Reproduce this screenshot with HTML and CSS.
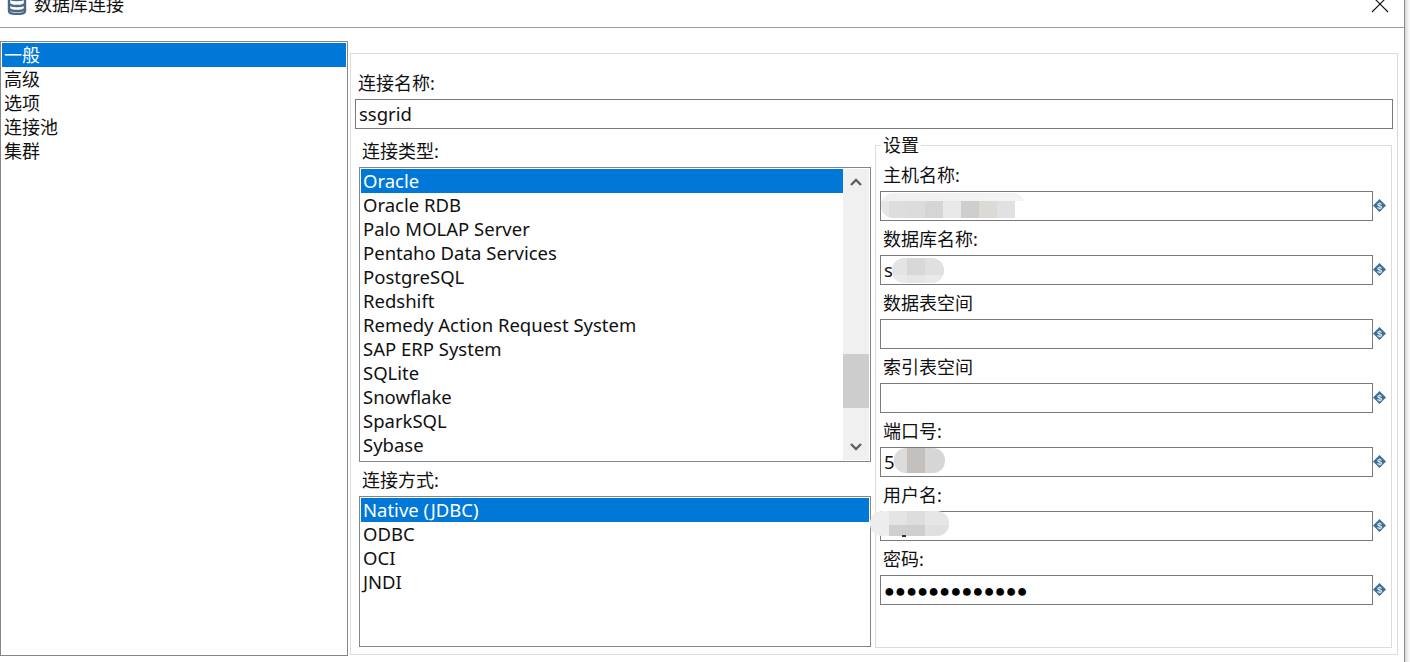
FILE: index.html
```html
<!DOCTYPE html>
<html lang="zh-CN">
<head>
  <meta charset="UTF-8">
  <title>数据库连接</title>
  <link rel="stylesheet" href="styles.css">
</head>
<body>

<div class="window">

  <!-- TITLE BAR -->
  <div class="titlebar">
    <svg class="db-icon" width="20" height="24" viewBox="0 0 20 24">
      <path d="M2 6v14c0 2 3.500 3 8 3s8-1 8-3V6" fill="#fff" stroke="#4a6a85" stroke-width="2.400"/>
      <ellipse cx="10" cy="6" rx="8" ry="3" fill="none" stroke="#4a6a85" stroke-width="2.400"/>
      <path d="M2 12c0 2 3.500 3 8 3s8-1 8-3M2 17c0 2 3.500 3 8 3s8-1 8-3" fill="none" stroke="#4a6a85" stroke-width="2.400"/>
    </svg>
    <span class="title">数据库连接</span>
    <svg class="close" width="18" height="18" viewBox="0 0 18 18">
      <path d="M1 0L17 16M17 0L1 16" stroke="#111" stroke-width="1.100"/>
    </svg>
  </div>

  <div class="content">

    <!-- LEFT MENU -->
    <ul class="list menu">
      <li class="selected">一般</li>
      <li>高级</li>
      <li>选项</li>
      <li>连接池</li>
      <li>集群</li>
    </ul>

    <div class="panel">
      <div class="name-label">连接名称:</div>
      <input class="name-input" type="text" value="ssgrid">

      <div class="columns">

        <div class="left-col">
          <div class="col-label">连接类型:</div>
          <div class="list type-list">
            <ul>
              <li class="selected">Oracle</li>
              <li>Oracle RDB</li>
              <li>Palo MOLAP Server</li>
              <li>Pentaho Data Services</li>
              <li>PostgreSQL</li>
              <li>Redshift</li>
              <li>Remedy Action Request System</li>
              <li>SAP ERP System</li>
              <li>SQLite</li>
              <li>Snowflake</li>
              <li>SparkSQL</li>
              <li>Sybase</li>
            </ul>
            <div class="scrollbar">
              <svg width="12" height="8" viewBox="0 0 12 8"><path d="M1 7L6 2L11 7" fill="none" stroke="#606060" stroke-width="2.400"/></svg>
              <div class="track"><div class="thumb"></div></div>
              <svg width="12" height="8" viewBox="0 0 12 8"><path d="M1 1L6 6L11 1" fill="none" stroke="#606060" stroke-width="2.400"/></svg>
            </div>
          </div>

          <div class="col-label method-label">连接方式:</div>
          <ul class="list method-list">
            <li class="selected">Native (JDBC)</li>
            <li>ODBC</li>
            <li>OCI</li>
            <li>JNDI</li>
          </ul>
        </div>

        <fieldset class="settings">
          <legend>设置</legend>

          <div class="field-label">主机名称:</div>
          <div class="field">
            <input type="text">
            <div class="smudge smudge-host"></div>
            <svg class="var-icon" width="13" height="13" viewBox="0 0 13 13"><path d="M6.500 0L13 6.500L6.500 13L0 6.500Z" fill="#3f6f94"/><text x="6.500" y="9.800" text-anchor="middle">$</text></svg>
          </div>

          <div class="field-label">数据库名称:</div>
          <div class="field">
            <input type="text" value="s">
            <div class="smudge smudge-db"></div>
            <svg class="var-icon" width="13" height="13" viewBox="0 0 13 13"><path d="M6.500 0L13 6.500L6.500 13L0 6.500Z" fill="#3f6f94"/><text x="6.500" y="9.800" text-anchor="middle">$</text></svg>
          </div>

          <div class="field-label">数据表空间</div>
          <div class="field">
            <input type="text">
            <svg class="var-icon" width="13" height="13" viewBox="0 0 13 13"><path d="M6.500 0L13 6.500L6.500 13L0 6.500Z" fill="#3f6f94"/><text x="6.500" y="9.800" text-anchor="middle">$</text></svg>
          </div>

          <div class="field-label">索引表空间</div>
          <div class="field">
            <input type="text">
            <svg class="var-icon" width="13" height="13" viewBox="0 0 13 13"><path d="M6.500 0L13 6.500L6.500 13L0 6.500Z" fill="#3f6f94"/><text x="6.500" y="9.800" text-anchor="middle">$</text></svg>
          </div>

          <div class="field-label">端口号:</div>
          <div class="field">
            <input type="text" value="5">
            <div class="smudge smudge-port"></div>
            <svg class="var-icon" width="13" height="13" viewBox="0 0 13 13"><path d="M6.500 0L13 6.500L6.500 13L0 6.500Z" fill="#3f6f94"/><text x="6.500" y="9.800" text-anchor="middle">$</text></svg>
          </div>

          <div class="field-label">用户名:</div>
          <div class="field">
            <input type="text">
            <div class="smudge smudge-user"></div>
            <svg class="var-icon" width="13" height="13" viewBox="0 0 13 13"><path d="M6.500 0L13 6.500L6.500 13L0 6.500Z" fill="#3f6f94"/><text x="6.500" y="9.800" text-anchor="middle">$</text></svg>
          </div>

          <div class="field-label">密码:</div>
          <div class="field">
            <input class="password" type="text" value="●●●●●●●●●●●●●">
            <svg class="var-icon" width="13" height="13" viewBox="0 0 13 13"><path d="M6.500 0L13 6.500L6.500 13L0 6.500Z" fill="#3f6f94"/><text x="6.500" y="9.800" text-anchor="middle">$</text></svg>
          </div>
        </fieldset>

      </div>
    </div>
  </div>
</div>

</body>
</html>
```

FILE: styles.css
```css
* {
  box-sizing: border-box;
}
html, body {
  margin: 0;
  height: 662px;
  overflow: hidden;
}
body {
  font-family: "Noto Sans", "Noto Sans CJK SC", sans-serif;
  font-size: 18px;
  line-height: 24px;
  color: #111;
  background: linear-gradient(to right, #d8d8d8, #fff) no-repeat 1405px 0 / 5px 100%;
}
ul {
  list-style: none;
  margin: 0;
  padding: 0;
}
input {
  display: block;
  font: inherit;
  font-size: 18.500px;
  color: inherit;
  height: 30px;
  padding: 0 3px 2px;
  background: transparent;
  border: 1px solid #7a7a7a;
  border-radius: 0;
  outline: none;
}

.window {
  width: 1405px;
  height: 662px;
  background: #fff;
  border-right: 1px solid #8a8a8a;
}

.titlebar {
  display: flex;
  height: 28px;
  overflow: hidden;
  border-bottom: 1px solid #a0a0a0;
  padding-left: 7px;
}
.db-icon {
  margin-top: -9px;
}
.title {
  margin-top: -9px;
  margin-left: 7px;
  font-family: "Noto Sans CJK SC", sans-serif;
}
.close {
  margin-left: auto;
  margin-top: -4px;
  margin-right: 15px;
}

.content {
  display: flex;
  align-items: flex-start;
}

.list {
  border: 1px solid #82878c;
  background: #fff;
  padding: 1px;
  font-size: 18.500px;
}
.list li {
  height: 24px;
  padding-left: 2px;
  white-space: nowrap;
}
.list .selected {
  background: #0078d7;
  color: #fff;
}

.menu {
  width: 348px;
  height: 615px;
  margin-top: 13px;
  font-size: 18px;
}
.menu li {
  line-height: 25px;
}

.panel {
  width: 1048px;
  height: 602px;
  margin-top: 25px;
  margin-left: 2px;
  padding: 17px 0 0 4px;
  border: 1px solid #dcdcdc;
}
.name-label {
  margin-left: 3px;
  height: 24px;
}
.name-input {
  width: 1038px;
  margin-top: 4px;
}

.columns {
  display: flex;
  margin-top: 4px;
}
.left-col {
  width: 512px;
  margin-left: 4px;
  margin-top: 6px;
}
.col-label {
  margin-left: 3px;
  margin-bottom: 4px;
  height: 24px;
}
.method-label {
  margin-top: 6px;
}

.type-list {
  display: flex;
  height: 295px;
}
.type-list ul {
  flex: 1;
}
.scrollbar {
  width: 26px;
  background: #f0f0f0;
  display: flex;
  flex-direction: column;
  align-items: center;
  padding: 9px 0;
}
.track {
  flex: 1;
  align-self: stretch;
  padding-top: 168px;
}
.thumb {
  height: 54px;
  background: #cdcdcd;
}
.method-list {
  height: 151px;
}

.settings {
  width: 517px;
  height: 515px;
  margin: 0 0 0 4px;
  padding: 6px 0 0 4px;
  border: 1px solid #dcdcdc;
  min-width: 0;
}
.settings legend {
  margin-left: 1px;
  padding: 0 2px;
  font-size: 18px;
  height: 24px;
}
.field-label {
  margin-left: 3px;
  margin-bottom: 4px;
  height: 24px;
}
.field {
  position: relative;
  margin-bottom: 6px;
  display: flex;
  align-items: center;
}
.field input {
  width: 493px;
}
.var-icon {
  margin-bottom: 2px;
}
.var-icon text {
  font-family: "Liberation Sans", sans-serif;
  font-size: 9px;
  font-weight: bold;
  fill: #dfe9f0;
}
.field .password {
  font-family: "Liberation Sans", sans-serif;
  font-size: 18px;
  letter-spacing: 0.200px;
  color: #000;
  padding: 2px 3px 0;
}

/* blurred-out values */
.smudge {
  position: absolute;
  height: 25px;
  border-radius: 12px;
  background-repeat: no-repeat;
  filter: blur(0.600px);
}
.smudge-host {
  left: 1px;
  top: 2px;
  width: 144px;
  background-image:
    linear-gradient(to right, #e6e6e6 8px, #ddd 8px 26px, #dcdcdc 26px 44px, #d5d5d5 44px 62px, #e9e9e9 62px 80px, #cfcdcd 80px 98px, #dcdad7 98px 116px, #e0e1e3 116px 134px, #fff 134px),
    linear-gradient(to right, #f0f0f0, #f4f4f4);
  background-size: 100% 17px, 100% 8px;
  background-position: 0 8px, 0 0;
}
.smudge-db {
  left: 12px;
  top: 3px;
  width: 52px;
  background-image:
    linear-gradient(to right, #eaeaea 15px, #e6e6e6 15px 33px, #eaeaea 33px),
    linear-gradient(to right, #e4e4e4 15px, #d8d8d8 15px 33px, #e0e0e0 33px);
  background-size: 100% 8px, 100% 17px;
  background-position: 0 17px, 0 0;
}
.smudge-port {
  left: 14px;
  top: 1px;
  width: 51px;
  background-image: linear-gradient(to right, #dcdcdc 13px, #c4c0be 13px 31px, #d6d6d6 31px);
}
.smudge-user {
  left: -10px;
  top: 0;
  width: 79px;
  background-image:
    linear-gradient(to right, #ededed 19px, #cfcfcf 19px 55px, #e0e0e0 55px),
    linear-gradient(to right, #eee 19px, #e4e4e4 19px 37px, #ddd 37px 55px, #e6e6e6 55px);
  background-size: 100% 11px, 100% 14px;
  background-position: 0 14px, 0 0;
}
/* descender of the hidden value, still showing under the blur */
.smudge-user::after {
  content: "";
  position: absolute;
  left: 32px;
  bottom: -1px;
  width: 4px;
  height: 2px;
  background: #333;
}
```
